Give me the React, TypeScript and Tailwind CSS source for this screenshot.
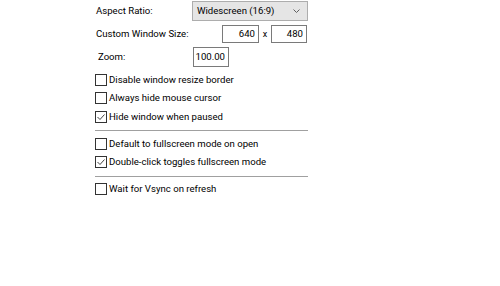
import React from 'react';

const font = { fontFamily: 'Roboto, "Liberation Sans", sans-serif' };

const Check = ({ checked }: { checked?: boolean }) => (
  <span className="w-[12px] h-[12px] border border-[#333333] bg-white flex items-center justify-center shrink-0">
    {checked && (
      <svg width="10" height="10" viewBox="0 0 10 10">
        <path d="M1.5 5 L4 7.5 L8.5 2.5" fill="none" stroke="#444444" strokeWidth="1" />
      </svg>
    )}
  </span>
);

const Row = ({ label, checked, h = 'h-[18px]' }: { label: string; checked?: boolean; h?: string }) => (
  <div className={`flex items-center ${h}`}>
    <Check checked={checked} />
    <span className="ml-[2px] text-[9.6px] leading-none whitespace-nowrap">{label}</span>
  </div>
);

const Sep = ({ mt }: { mt: string }) => <div className={`${mt} w-[213px] h-px bg-[#a0a0a0]`} />;

export default function App() {
  return (
    <div className="w-[500px] h-[286px] bg-white pl-[95px] pt-px text-black" style={font}>
      <div className="flex items-center h-[20px]">
        <span className="w-[97px] pl-px text-[9.6px] whitespace-nowrap">Aspect Ratio:</span>
        <div className="w-[116px] h-[20px] bg-[#e5e5e5] border border-[#adadad] flex items-center justify-between pl-[4px] pr-[7px]">
          <span className="text-[9.6px] leading-none whitespace-nowrap">Widescreen (16:9)</span>
          <svg width="7" height="4" viewBox="0 0 7 4">
            <path d="M0.5 0.5 L3.5 3.5 L6.5 0.5" fill="none" stroke="#606060" strokeWidth="1" />
          </svg>
        </div>
      </div>

      <div className="flex items-center h-[18px] mt-[4px]">
        <span className="w-[127px] pl-px text-[9.6px] whitespace-nowrap">Custom Window Size:</span>
        <div className="w-[37px] h-[18px] border border-[#7a7a7a] bg-white flex items-center justify-end pr-[3px] text-[9.6px] leading-none">640</div>
        <span className="w-[12px] text-center text-[9px] leading-none">x</span>
        <div className="w-[36px] h-[18px] border border-[#7a7a7a] bg-white flex items-center justify-end pr-[3px] text-[9.6px] leading-none">480</div>
      </div>

      <div className="flex items-center h-[20px] mt-[4px]">
        <span className="w-[98px] pl-[3px] text-[9.6px]">Zoom:</span>
        <div className="w-[36px] h-[20px] border border-[#7a7a7a] bg-white flex items-center justify-end pr-[3px] text-[9.6px] leading-none">100.00</div>
      </div>

      <div className="mt-[4px]">
        <Row label="Disable window resize border" />
        <Row label="Always hide mouse cursor" />
        <Row label="Hide window when paused" checked h="h-[19px]" />
      </div>
      <Sep mt="mt-[4px]" />
      <div className="mt-[4px]">
        <Row label="Default to fullscreen mode on open" />
        <Row label="Double-click toggles fullscreen mode" checked />
      </div>
      <Sep mt="mt-[5px]" />
      <div className="mt-[3px]">
        <Row label="Wait for Vsync on refresh" />
      </div>
    </div>
  );
}
